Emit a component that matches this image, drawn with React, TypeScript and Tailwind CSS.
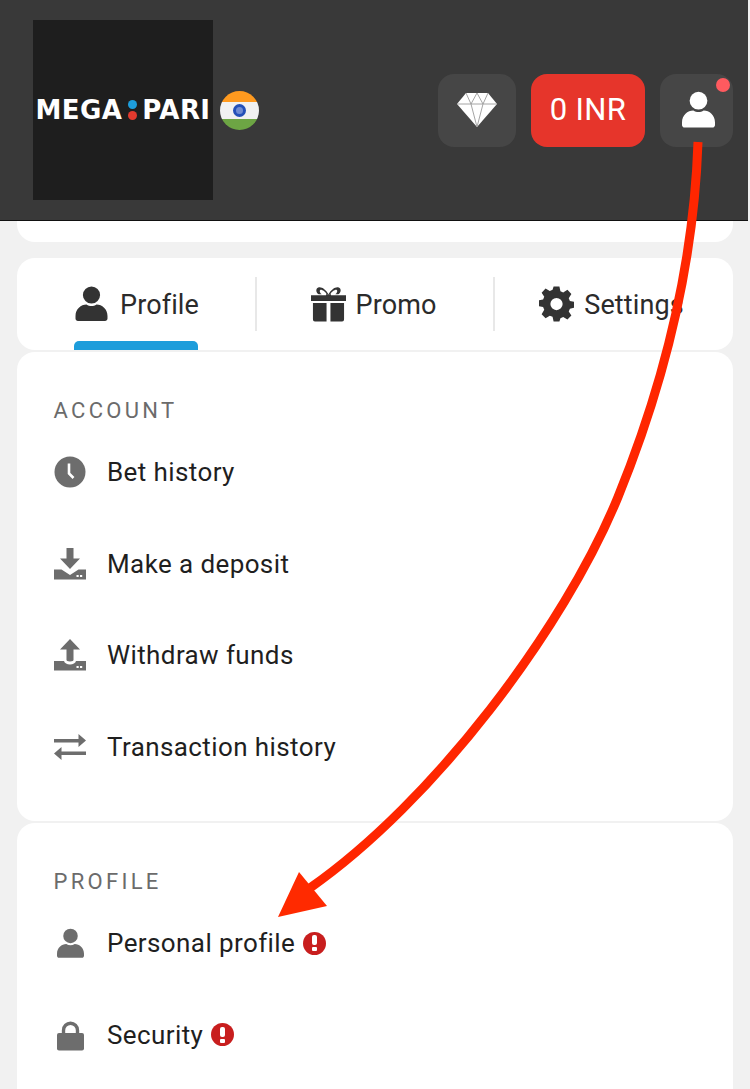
import type { ReactNode } from "react";

const PersonIcon = ({ className }: { className: string }) => (
  <svg viewBox="0 0 32 36" className={className} fill="currentColor">
    <circle cx="16" cy="9" r="8.6" />
    <path d="M0 30c0-7 5.500-11.500 11-11.500 1.600 1 3.200 1.500 5 1.500s3.400-.5 5-1.500C26.500 18.500 32 23 32 30v2.500c0 1.400-1.100 2.500-2.500 2.500h-27C1.100 35 0 33.900 0 32.500z" />
  </svg>
);

const GiftIcon = () => (
  <svg viewBox="0 0 36 36" className="h-[36px] w-[35px] text-[#333333]" fill="currentColor">
    <path d="M0 9h15.500v6H0zM20.500 9H36v6H20.500zM15.500 8h5v7h-5z" />
    <path d="M2 17h14v19H4a2 2 0 0 1-2-2zM20 17h14v17a2 2 0 0 1-2 2H20z" />
    <path d="M18 8C15 3 11 0 7.500 1 4.500 2 5 6.500 8 8h3C9 6.500 8.500 4 9.500 3.500 11.500 3 15 5.500 16 8zM18 8c3-5 7-8 10.500-7 3 1 2.500 5.500-.5 7h-3c2-1.500 2.500-4 1.500-4.500-2-.5-5.500 2-6.500 4.500z" />
  </svg>
);

const GearIcon = () => (
  <svg viewBox="0 0 24 24" className="h-[36px] w-[35px] text-[#333333]" fill="currentColor">
    <path d="M10 0h4l.7 3.300 1.900.8L19.500 2.300l2.700 2.900-1.800 2.800.8 1.900 2.800.6v4l-2.800.7-.8 1.900 1.800 2.800-2.700 2.800-2.900-1.800-1.900.8L14 24h-4l-.7-3.200-1.900-.8-2.900 1.800-2.700-2.800L3.600 16l-.8-1.900L0 13.500v-4l2.800-.6.800-1.900-1.800-2.800 2.700-2.900 2.900 1.800 1.900-.8zM12 7.800a4.200 4.200 0 1 0 0 8.400 4.200 4.200 0 0 0 0-8.400z" fillRule="evenodd" />
  </svg>
);

const DiamondIcon = () => (
  <svg viewBox="0 0 40 34" className="h-[34px] w-[40px]">
    <path d="M9 0h22l9 11-20 23L0 11z" fill="#ffffff" />
    <path d="M0 11h40M9 0l5 11 6 23 6-23 5-11M14 11l6-11 6 11" fill="none" stroke="#9a9a9a" strokeWidth="0.9" />
  </svg>
);

const ClockIcon = () => (
  <svg viewBox="0 0 32 32" className="h-[32px] w-[32px] text-[#6d6d6d]">
    <circle cx="16" cy="16" r="15.500" fill="currentColor" />
    <path d="M15 7.500v10l4.500 4.500" fill="none" stroke="#ffffff" strokeWidth="2.600" />
  </svg>
);

const TrayArrow = ({ up }: { up?: boolean }) => (
  <svg viewBox="0 0 32 32" className="h-[32px] w-[32px] text-[#6d6d6d]" fill="currentColor">
    {up ? (
      <path d="M16 0l10 10.500h-6.500V21c0 .6-1 1.500-3.500 1.500S12.500 21.600 12.500 21V10.500H6z" />
    ) : (
      <path d="M12.500 0h7v10.500H26L16 21 6 10.500h6.500z" />
    )}
    <path
      d={
        up
          ? "M0 22h10c.5 2 3 3.500 6 3.500s5.500-1.500 6-3.500h10v9.500H0z"
          : "M0 21.500h7.500L16 27l8.500-5.500H32v10H0z"
      }
    />
    <rect x="22.500" y="27" width="2.200" height="2" fill="#ffffff" />
    <rect x="26" y="27" width="2.200" height="2" fill="#ffffff" />
  </svg>
);

const TransferIcon = () => (
  <svg viewBox="0 0 32 26" className="h-[26px] w-[32px] text-[#6d6d6d]" fill="currentColor">
    <path d="M0 6h24.500V1L32 7.500 24.500 14V9.500H0z" transform="translate(0 -1)" />
    <path d="M32 20H7.500v5L0 18.500 7.500 12v4.500H32z" transform="translate(0 1)" />
  </svg>
);

const LockIcon = () => (
  <svg viewBox="0 0 28 30" className="mt-[2px] h-[30px] w-[27px] text-[#6d6d6d]" fill="currentColor">
    <path d="M5 13V9a9 9 0 0 1 18 0v4h-3.500V9a5.500 5.500 0 0 0-11 0v4z" />
    <rect x="0" y="12" width="28" height="18" rx="2" />
  </svg>
);

const Alert = () => (
  <span className="flex h-[23px] w-[23px] flex-col items-center justify-center gap-[2px] rounded-full bg-[#c81e1e]">
    <span className="h-[10px] w-[5px] rounded-[2px] bg-white" />
    <span className="h-[4px] w-[5px] rounded-[1px] bg-white" />
  </span>
);

function Flag() {
  return (
    <span className="ml-[7px] flex h-[39px] w-[39px] flex-col overflow-hidden rounded-full">
      <span className="h-[11px] bg-[#ff9a1f]" />
      <span className="flex h-[17px] items-center justify-center bg-[#f1f1f1]">
        <span className="h-[13px] w-[13px] rounded-full border-[3px] border-[#2450b8] bg-[#6f8bd2]" />
      </span>
      <span className="h-[11px] bg-[#6da544]" />
    </span>
  );
}

function Row({ icon, label, alert }: { icon: ReactNode; label: string; alert?: boolean }) {
  return (
    <div className="flex h-[32px] items-center">
      <span className="flex w-[32px] justify-center">{icon}</span>
      <span className="ml-[21px] text-[26px] leading-[32px] tracking-[0.4px] text-[#1f1f1f]">{label}</span>
      {alert && (
        <span className="ml-[8px]">
          <Alert />
        </span>
      )}
    </div>
  );
}

function Tab({ icon, label, active, className }: { icon: ReactNode; label: string; active?: boolean; className: string }) {
  return (
    <div className={`relative flex h-[92px] items-center justify-center ${className}`}>
      <div className="flex items-center gap-[10px]">
        {icon}
        <span className="pt-[2px] text-[27px] leading-[36px] tracking-[0.1px] text-[#2b2b2b]">{label}</span>
      </div>
      {active && (
        <span className="absolute bottom-0 left-[57px] h-[9px] w-[124px] rounded-t-[5px] bg-[#1d9ddb]" />
      )}
    </div>
  );
}

export default function App() {
  return (
    <div className="relative h-[1089px] w-[750px] overflow-hidden bg-[#f1f1f1] font-['Roboto',sans-serif]">
      <header className="flex h-[221px] w-[748px] items-center border-b border-[#111111] bg-[#393939] pl-[33px] pr-[15px]">
        <div className="flex h-[180px] w-[180px] items-center justify-center bg-[#1e1e1e]">
          <span className="font-['DejaVu_Sans',sans-serif] text-[26px] font-bold leading-[26px] tracking-[0.4px] text-white">MEGA</span>
          <span className="ml-[6px] mr-[5px] flex flex-col gap-[2px]">
            <span className="h-[9px] w-[9px] rounded-full bg-[#1d9ddb]" />
            <span className="h-[9px] w-[9px] rounded-full bg-[#e23a2e]" />
          </span>
          <span className="font-['DejaVu_Sans',sans-serif] text-[26px] font-bold leading-[26px] tracking-[0.4px] text-white">PARI</span>
        </div>
        <Flag />
        <div className="ml-auto flex items-center gap-[15px]">
          <div className="flex h-[73px] w-[78px] items-center justify-center rounded-[16px] bg-[#464646]">
            <DiamondIcon />
          </div>
          <div className="flex h-[73px] w-[114px] items-center justify-center rounded-[16px] bg-[#e6352b] text-[31px] tracking-[0.3px] text-white">
            0 INR
          </div>
          <div className="relative flex h-[73px] w-[73px] items-center justify-center rounded-[16px] bg-[#464646] pl-[3px]">
            <PersonIcon className="h-[38px] w-[33px] text-white" />
            <span className="absolute right-[3px] top-[4px] h-[14px] w-[14px] rounded-full bg-[#ff5a5f]" />
          </div>
        </div>
      </header>

      <div className="mx-[17px] h-[21px] rounded-b-[18px] bg-white" />

      <nav className="mx-[17px] mt-[16px] flex h-[92px] overflow-hidden rounded-[18px] bg-white">
        <Tab active className="w-[238px] pl-[2px]" icon={<PersonIcon className="mr-[2px] h-[36px] w-[33px] text-[#333333]" />} label="Profile" />
        <span className="mt-[19px] h-[54px] w-[2px] shrink-0 bg-[#e8e8e8]" />
        <Tab className="w-[236px] pr-[3px]" icon={<GiftIcon />} label="Promo" />
        <span className="mt-[19px] h-[54px] w-[2px] shrink-0 bg-[#e8e8e8]" />
        <Tab className="flex-1 pr-[5px]" icon={<GearIcon />} label="Settings" />
      </nav>

      <section className="mx-[17px] mt-[2px] h-[469px] rounded-[18px] bg-white pl-[37px] pt-[46px]">
        <h2 className="-ml-[0.5px] text-[22px] leading-[26px] tracking-[3.3px] text-[#6b6b6b]">ACCOUNT</h2>
        <div className="mt-[32px] flex flex-col gap-[59.500px]">
          <Row icon={<ClockIcon />} label="Bet history" />
          <Row icon={<TrayArrow />} label="Make a deposit" />
          <Row icon={<TrayArrow up />} label="Withdraw funds" />
          <Row icon={<TransferIcon />} label="Transaction history" />
        </div>
      </section>

      <section className="mx-[17px] mt-[2px] h-[280px] rounded-t-[18px] bg-white pl-[37px] pt-[46px]">
        <h2 className="-ml-[0.5px] text-[22px] leading-[26px] tracking-[3.3px] text-[#6b6b6b]">PROFILE</h2>
        <div className="mt-[32px] flex flex-col gap-[59.500px]">
          <Row icon={<PersonIcon className="h-[31px] w-[27px] text-[#6d6d6d]" />} label="Personal profile" alert />
          <Row icon={<LockIcon />} label="Security" alert />
        </div>
      </section>

      {/* annotation arrow drawn over the page */}
      <svg viewBox="0 0 750 1089" className="pointer-events-none absolute left-0 top-0 h-[1089px] w-[750px]">
        <path
          d="M698 142C694 260 666 379 618 497C564 629 433 802 310 888"
          fill="none"
          stroke="#ff2600"
          strokeWidth="9"
        />
        <path d="M278 917L299 872 327 906z" fill="#ff2a00" />
      </svg>
    </div>
  );
}
